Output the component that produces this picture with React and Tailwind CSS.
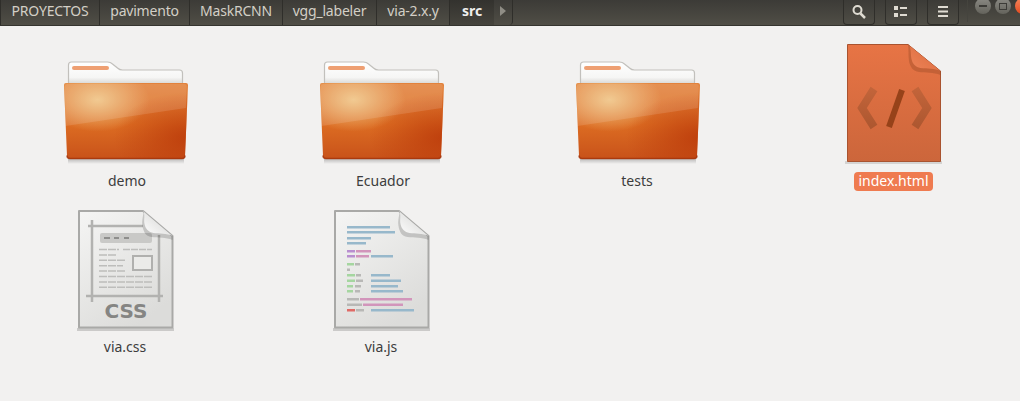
import React from "react";

const crumbs = [
  { name: "PROYECTOS", width: "w-[99px]" },
  { name: "pavimento", width: "w-[90px]" },
  { name: "MaskRCNN", width: "w-[93px]" },
  { name: "vgg_labeler", width: "w-[94px]" },
  { name: "via-2.x.y", width: "w-[73px]" },
];

const FolderIcon = ({ id }) => (
  <svg width="128" height="124" viewBox="0 0 128 124" className="block">
    <defs>
      <linearGradient id={`${id}-base`} x1="0" y1="0" x2="0" y2="1">
        <stop offset="0" stopColor="#e2823c" />
        <stop offset="0.55" stopColor="#dc6c22" />
        <stop offset="1" stopColor="#c8521a" />
      </linearGradient>
      <radialGradient id={`${id}-glow`} cx="0.27" cy="0.22" r="0.42">
        <stop offset="0" stopColor="#efc383" stopOpacity="1" />
        <stop offset="1" stopColor="#efc383" stopOpacity="0" />
      </radialGradient>
      <radialGradient id={`${id}-dark`} cx="1" cy="0.72" r="0.6">
        <stop offset="0" stopColor="#bb3a0a" stopOpacity="0.85" />
        <stop offset="1" stopColor="#bb3a0a" stopOpacity="0" />
      </radialGradient>
      <linearGradient id={`${id}-paper`} x1="0" y1="0" x2="0" y2="1">
        <stop offset="0" stopColor="#ffffff" />
        <stop offset="0.7" stopColor="#f6f6f5" />
        <stop offset="1" stopColor="#d8d7d4" />
      </linearGradient>
      <linearGradient id={`${id}-shade`} x1="0" y1="0" x2="0" y2="1">
        <stop offset="0" stopColor="#000000" stopOpacity="0.22" />
        <stop offset="1" stopColor="#000000" stopOpacity="0" />
      </linearGradient>
    </defs>
    <path d="M7.500 42V23q0-3 3-3h36q3 0 5 2l5 4q2 2 5 2h57q3 0 3 3v11z" fill={`url(#${id}-paper)`} stroke="#c2c0bc" strokeWidth="1.200" />
    <rect x="11" y="24" width="37" height="4" rx="2" fill="#ee9f72" />
    <rect x="7" y="117" width="116" height="5" fill={`url(#${id}-shade)`} />
    <path d="M3 43q0-2 2-2h120q2 0 2 2l-3 71q0 3-3 3H9q-3 0-3-3z" fill={`url(#${id}-base)`} />
    <path d="M3 43q0-2 2-2h120q2 0 2 2l-3 71q0 3-3 3H9q-3 0-3-3z" fill={`url(#${id}-glow)`} />
    <path d="M3 43q0-2 2-2h120q2 0 2 2l-3 71q0 3-3 3H9q-3 0-3-3z" fill={`url(#${id}-dark)`} />
    <path d="M4.600 84 3.800 44q0-2 2-2h118q2 0 2 2l-1 22z" fill="#ffffff" opacity="0.12" />
    <path d="M6 113.500q0 3 3 3h112q3 0 3-3" fill="none" stroke="#a2350c" strokeWidth="1.500" opacity="0.8" />
  </svg>
);

const HtmlIcon = () => (
  <svg width="128" height="124" viewBox="0 0 128 124" className="block">
    <defs>
      <linearGradient id="html-base" x1="0" y1="0" x2="0" y2="1">
        <stop offset="0" stopColor="#e77445" />
        <stop offset="1" stopColor="#cc663b" />
      </linearGradient>
      <linearGradient id="html-fold" x1="0" y1="1" x2="1" y2="0">
        <stop offset="0" stopColor="#ee8458" />
        <stop offset="1" stopColor="#d9693c" />
      </linearGradient>
      <linearGradient id="html-chevron" x1="0" y1="0" x2="0" y2="1">
        <stop offset="0" stopColor="#c2643a" />
        <stop offset="1" stopColor="#ad5730" />
      </linearGradient>
    </defs>
    <rect x="16" y="119" width="97" height="3" fill="#000000" opacity="0.12" />
    <path d="M18.500 2.500H79L111.500 29V119.500H18.500z" fill="url(#html-base)" stroke="#a9532f" strokeWidth="1" />
    <path d="M79 2.500 111.500 29v4C104 30 97 31 90 30c-6-1-9-5-10-11-1-6 0-11-1-16.500z" fill="#8f4523" opacity="0.35" />
    <path d="M79 2.500 111.500 29c-6-3-13-2-20-3-5-1-8-4-9-9-1-5 0-9-2.500-14.500z" fill="url(#html-fold)" />
    <path d="M45 47 33 66l12 19" fill="none" stroke="url(#html-chevron)" strokeWidth="8" />
    <path d="M86 47l12 19-12 19" fill="none" stroke="url(#html-chevron)" strokeWidth="8" />
    <path d="M73 48 60 85" fill="none" stroke="#964219" strokeWidth="6" />
  </svg>
);

// fondo común de los documentos grises
const PaperIcon = ({ id, children }) => (
  <svg width="128" height="124" viewBox="0 0 128 124" className="block">
    <defs>
      <linearGradient id={`${id}-paper`} x1="0" y1="0" x2="0.600" y2="1">
        <stop offset="0" stopColor="#f5f5f4" />
        <stop offset="1" stopColor="#dcdcda" />
      </linearGradient>
      <linearGradient id={`${id}-fold`} x1="0" y1="1" x2="1" y2="0">
        <stop offset="0" stopColor="#ffffff" />
        <stop offset="1" stopColor="#cfcfcd" />
      </linearGradient>
    </defs>
    <rect x="16" y="120" width="97" height="3" fill="#000000" opacity="0.16" />
    <path d="M18 3H82L111.500 28V119.500H18z" fill={`url(#${id}-paper)`} stroke="#a9a9a7" strokeWidth="2" strokeLinejoin="round" />
    {children}
    <path d="M82 3 111.500 28v4c-7-3-14-2-21-3-6-1-8-5-9-11-1-6 1-10 1-15z" fill="#000000" opacity="0.16" />
    <path d="M82 3 111.500 28c-6-3-13-2-19-3-5-1-8-4-9-9-1-5 1-9-1.500-13z" fill={`url(#${id}-fold)`} />
  </svg>
);

const cssLines = [
  [38, 20, 62, 29],
  [38, 18],
  [38, 26],
  [38, 24],
  [38, 26],
  [38, 53],
  [38, 53],
  [38, 53],
];

const CssIcon = () => (
  <PaperIcon id="css">
    <path d="M31 12V94M27 18H82M98 27V94M25 88H102" stroke="#b2b2b0" strokeWidth="2.500" fill="none" />
    <rect x="39" y="25" width="52" height="10" rx="2" fill="#c9c9c7" />
    <path d="M43 30h6M53 30h5M63 30h5" stroke="#8e8e8c" strokeWidth="2" />
    {cssLines.map((l, i) => (
      <g key={i} stroke="#bdbdbb" strokeWidth="1.500">
        <path d={`M${l[0]} ${41.500 + i * 5.400}h${l[1]}`} strokeDasharray="8 1" />
        {l.length > 2 && <path d={`M${l[2]} ${41.500 + i * 5.400}h${l[3]}`} strokeDasharray="7 1" />}
      </g>
    ))}
    <rect x="72" y="48" width="19" height="14" fill="#ebebe9" stroke="#b0b0ae" strokeWidth="2" />
    <text x="65" y="110" textAnchor="middle" fill="#858583" fontFamily="DejaVu Sans" fontWeight="700" fontSize="20">CSS</text>
  </PaperIcon>
);

const blue = "#97b8cb";
const pink = "#d295bb";
const purple = "#b98fd0";
const green = "#a5d6a0";
const grey = "#b8b8b6";

const jsLines = [
  [18, [[30, 43, blue]]],
  [23, [[30, 48, blue]]],
  [29, [[30, 24, blue]]],
  [34, [[30, 19, blue]]],
  [42, [[30, 8, purple], [39, 15, pink]]],
  [47, [[30, 8, purple], [39, 13, pink], [54, 22, blue]]],
  [55, [[30, 7, green], [38, 5, grey]]],
  [60.500, [[30, 3, grey]]],
  [66, [[30, 8, green], [39, 5, grey], [54, 19, blue]]],
  [71.500, [[30, 8, green], [39, 7, grey], [54, 30, blue]]],
  [77, [[30, 6, green], [38, 6, grey], [54, 27, blue]]],
  [82, [[30, 6, green], [38, 5, grey], [54, 32, blue]]],
  [90, [[30, 12, grey], [43, 52, pink]]],
  [95.500, [[30, 15, grey], [46, 40, pink]]],
  [101, [[30, 8, "#e06a66"], [39, 8, grey], [54, 43, blue]]],
];

const JsIcon = () => (
  <PaperIcon id="js">
    {jsLines.map(([y, parts]) =>
      parts.map(([x, w, c]) => <rect key={`${y}-${x}`} x={x} y={y} width={w} height="2.500" fill={c} />)
    )}
  </PaperIcon>
);

const files = [
  { name: "demo", icon: <FolderIcon id="f1" />, labelClass: "ml-1" },
  { name: "Ecuador", icon: <FolderIcon id="f2" />, labelClass: "ml-1" },
  { name: "tests", icon: <FolderIcon id="f3" />, labelClass: "" },
  { name: "index.html", icon: <HtmlIcon />, labelClass: "bg-[#ef7b50] text-white ml-px" },
  { name: "via.css", icon: <CssIcon />, labelClass: "" },
  { name: "via.js", icon: <JsIcon />, labelClass: "" },
];

const HeaderButton = ({ children }) => (
  <div className="w-8 h-[25px] rounded-b-[4px] border border-t-0 border-[#2f2e2a] flex items-center justify-center">
    {children}
  </div>
);

export default function App() {
  return (
    <div className="w-[1020px] h-[401px] overflow-hidden bg-[#f2f1f0] text-[#3d3d3d] font-['Noto_Sans','Open_Sans',sans-serif]">
      <header className="h-[26px] flex overflow-hidden bg-gradient-to-b from-[#3c3b37] to-[#504e46] border-b border-[#35342f] text-[14px] text-[#d3cfc6]">
        <nav className="flex shrink-0 h-[25px] w-[513px] border-l border-r border-[#2f2e2a] rounded-br-[4px]">
          {crumbs.map((c) => (
            <div key={c.name} className={`${c.width} shrink-0 border-r border-[#2f2e2a] flex items-center justify-center leading-none pb-[3px] tracking-[-0.2px]`}>
              {c.name}
            </div>
          ))}
          <div className="w-[44px] shrink-0 bg-gradient-to-b from-[#33322e] to-[#46443d] flex items-center justify-center font-bold text-[#eeeeec] leading-none pb-[3px]">
            src
          </div>
          <div className="flex-1 flex items-center justify-center pb-[3px]">
            <div className="w-0 h-0 border-y-[5px] border-y-transparent border-l-[6px] border-l-[#8f8d85]" />
          </div>
        </nav>
        <div className="ml-[330px] flex shrink-0 gap-[10px]">
          <HeaderButton>
            <svg width="16" height="16" viewBox="0 0 16 16" fill="none" stroke="#dfdbd2" strokeWidth="2">
              <circle cx="6.500" cy="6" r="4" />
              <path d="M9.500 9.500 14 14" strokeWidth="2.500" />
            </svg>
          </HeaderButton>
          <HeaderButton>
            <svg width="14" height="12" viewBox="0 0 14 12" fill="#dfdbd2">
              <rect x="0" y="0" width="4" height="4" />
              <rect x="6" y="1" width="7" height="2" />
              <rect x="0" y="7" width="4" height="4" />
              <rect x="6" y="8" width="7" height="2" />
            </svg>
          </HeaderButton>
          <HeaderButton>
            <svg width="12" height="12" viewBox="0 0 12 12" fill="#dfdbd2">
              <rect x="1" y="0" width="10" height="2" />
              <rect x="1" y="4.500" width="10" height="2" />
              <rect x="1" y="9" width="10" height="2" />
            </svg>
          </HeaderButton>
        </div>
        <div className="ml-[8px] shrink-0 w-px h-[22px] bg-[#45443e]" />
        <div className="ml-[7px] flex shrink-0 gap-[4px] -mt-[2px] items-start">
          <div className="w-4 h-4 rounded-full bg-gradient-to-b from-[#8b8a84] to-[#64635c] flex items-center justify-center">
            <div className="w-2 h-[1.500px] bg-[#3c3b37]" />
          </div>
          <div className="w-4 h-4 rounded-full bg-gradient-to-b from-[#8b8a84] to-[#64635c] flex items-center justify-center">
            <div className="w-2 h-[7px] border border-[#3c3b37]" />
          </div>
          <div className="w-4 h-4 shrink-0 rounded-full bg-gradient-to-b from-[#f4845a] to-[#e4491c]" />
        </div>
      </header>
      <main className="grid grid-cols-[repeat(4,128px)] gap-x-[128px] gap-y-[2px] pl-[61px] pt-[16px] text-[14px]">
        {files.map((f) => (
          <div key={f.name} className="flex flex-col items-center h-[164px]">
            {f.icon}
            <span className={`mt-[6px] px-[4px] h-[19px] leading-[18px] rounded-[4px] ${f.labelClass}`}>
              {f.name}
            </span>
          </div>
        ))}
      </main>
    </div>
  );
}
